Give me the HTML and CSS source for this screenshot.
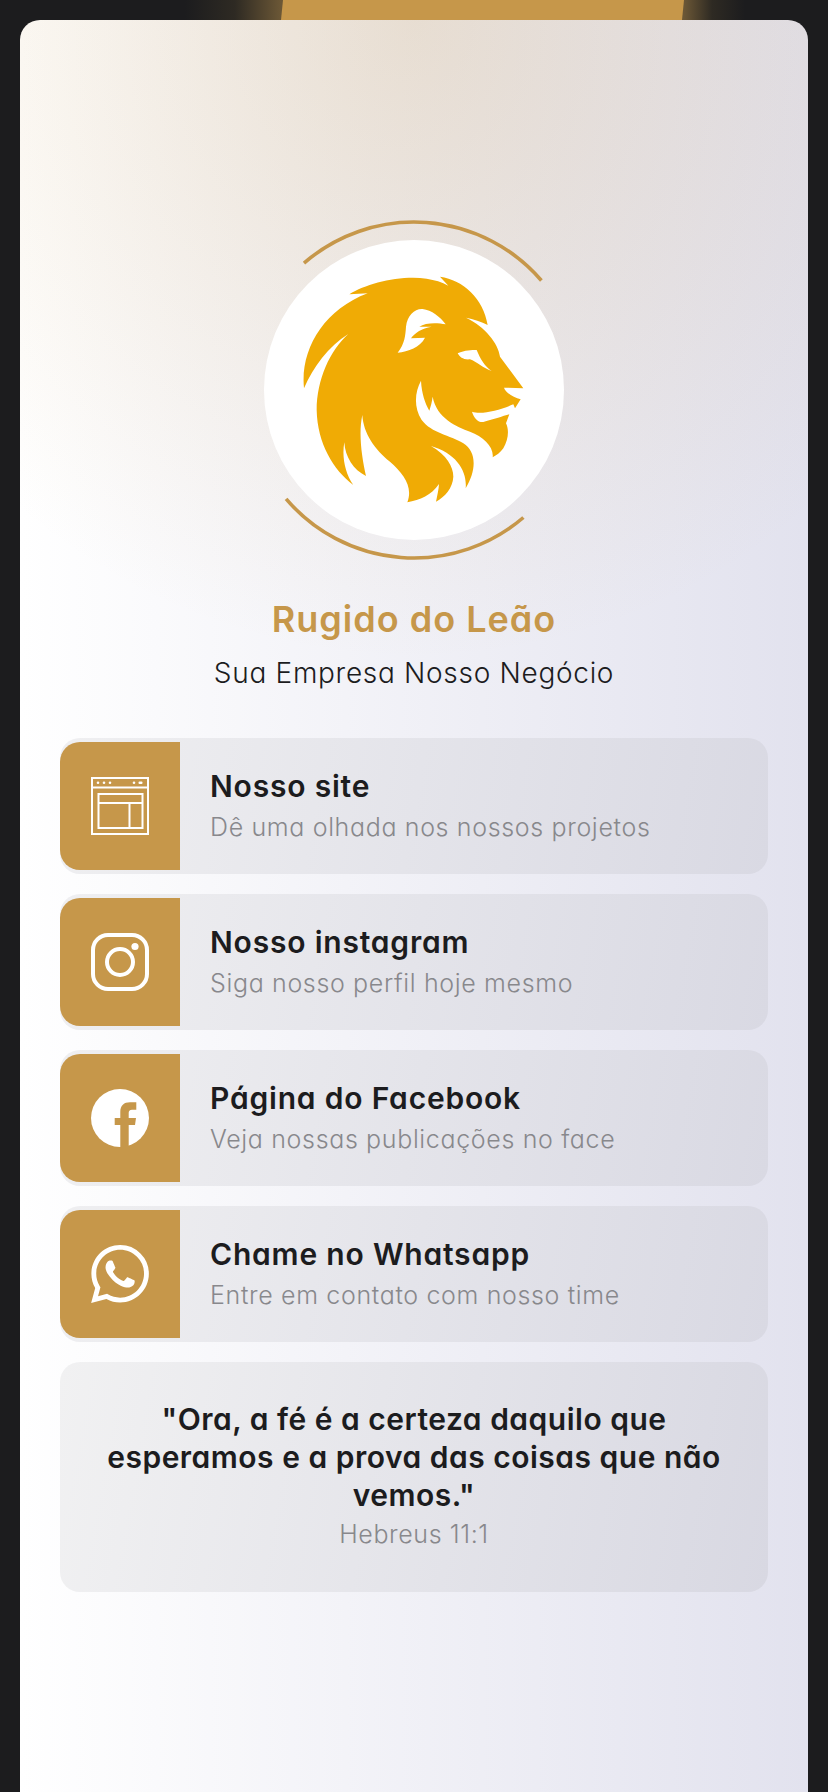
FILE: index.html
```html
<!DOCTYPE html>
<html lang="pt-BR">
<head>
<meta charset="utf-8">
<title>Rugido do Leão</title>
<link rel="stylesheet" href="styles.css">
</head>
<body>
<div class="top-strip"><div class="top-bar"></div></div>
<main class="card">
  <svg class="avatar" viewBox="0 0 340 340" width="340" height="340" aria-label="Logo">
    <path class="arc" d="M60 43.1A168 168 0 0 1 297.4 60.5"/>
    <path class="arc" d="M42.1 278.9A168 168 0 0 0 279.4 297.5"/>
    <circle cx="170" cy="170" r="150" fill="#fff"/>
    <g transform="translate(56 50) scale(.33333)">
      <path class="lion" fill-rule="evenodd" d="M148 73C200 40 300 15 380 26C405 30 425 36 445 47L420 20C490 30 550 85 563 165C545 155 520 147 498 143C555 170 595 220 600 260L670 355L612 353C616 368 640 382 662 388L645 415L640 403C600 420 545 435 516 425C522 445 535 458 550 456C575 450 610 438 628 433L618 460C628 480 625 510 610 535C600 548 590 556 578 562C582 530 550 500 510 485C470 470 410 445 398 380C396 395 392 410 388 422C375 400 365 370 363 332C345 365 340 410 365 450C395 490 450 495 490 520C530 545 530 600 497 655C502 605 470 550 393 528C440 555 460 590 460 620C458 655 435 680 408 695C412 675 416 660 417 642C395 675 360 690 322 697C340 650 310 610 270 575C225 540 190 490 187 435C175 490 185 560 198 618C160 600 135 560 133 517C125 560 135 610 160 645C100 600 52 520 50 420C50 330 90 240 145 192C85 230 40 290 12 355C0 240 70 120 203 70ZM293 248C315 220 316 195 318 170C322 135 345 115 368 117C395 120 420 140 437 163C410 157 375 158 358 170L395 170C365 175 345 188 333 205L375 203C360 232 325 245 293 248ZM473 250C495 240 515 240 530 240C540 265 555 290 575 303C550 295 530 275 510 268C490 270 480 262 473 250Z"/>
    </g>
  </svg>
  <h1 class="brand">Rugido do Leão</h1>
  <p class="tagline">Sua Empresa Nosso Negócio</p>

  <div class="links">
    <a class="link">
      <span class="link-icon">
        <svg class="ico" viewBox="0 0 58 58" width="58" height="58">
          <g fill="none" stroke="#fff" stroke-width="2">
            <rect x="1" y="1" width="56" height="56"/>
            <path d="M1 10.5H57"/>
            <rect x="7.5" y="17" width="44" height="34"/>
            <path d="M7.5 26H51.5M38.5 26V51"/>
          </g>
          <g fill="#fff">
            <circle cx="7" cy="5.7" r="1.3"/><circle cx="13" cy="5.7" r="1.3"/><circle cx="19" cy="5.7" r="1.3"/>
            <circle cx="43" cy="5.7" r="1.3"/><rect x="47.5" y="4.5" width="4" height="2.4" rx="1"/>
          </g>
        </svg>
      </span>
      <span class="link-text"><strong class="link-title">Nosso site</strong><span class="link-desc">Dê uma olhada nos nossos projetos</span></span>
    </a>
    <a class="link">
      <span class="link-icon">
        <svg class="ico" viewBox="0 0 58 58" width="58" height="58">
          <rect x="2" y="2" width="54" height="54" rx="15" fill="none" stroke="#fff" stroke-width="4"/>
          <circle cx="29" cy="29" r="13" fill="none" stroke="#fff" stroke-width="4"/>
          <circle cx="44" cy="13.5" r="3.6" fill="#fff"/>
        </svg>
      </span>
      <span class="link-text"><strong class="link-title">Nosso instagram</strong><span class="link-desc">Siga nosso perfil hoje mesmo</span></span>
    </a>
    <a class="link">
      <span class="link-icon">
        <svg class="ico" viewBox="0 0 58 58" width="58" height="58">
          <circle cx="29" cy="29" r="29" fill="#fff"/>
          <path fill="#c6974a" d="M29.3 58.5V36H23.7V29H29.3V23C29.3 16.5 33 13.3 39 13.3H45.3V20.7H41C38.5 20.7 37.7 22 37.7 24V29H45L44 36H37.7V58.5Z"/>
        </svg>
      </span>
      <span class="link-text"><strong class="link-title">Página do Facebook</strong><span class="link-desc">Veja nossas publicações no face</span></span>
    </a>
    <a class="link">
      <span class="link-icon">
        <svg class="ico" viewBox="0 0 24 24" width="58" height="58">
          <path fill="#fff" d="M17.472 14.382c-.297-.149-1.758-.867-2.03-.967-.273-.099-.471-.148-.67.15-.197.297-.767.966-.94 1.164-.173.199-.347.223-.644.075-.297-.15-1.255-.463-2.39-1.475-.883-.788-1.48-1.761-1.653-2.059-.173-.297-.018-.458.13-.606.134-.133.298-.347.446-.52.149-.174.198-.298.298-.497.099-.198.05-.371-.025-.52-.075-.149-.669-1.612-.916-2.207-.242-.579-.487-.5-.669-.51-.173-.008-.371-.01-.57-.01-.198 0-.52.074-.792.372-.272.297-1.04 1.016-1.04 2.479 0 1.462 1.065 2.875 1.213 3.074.149.198 2.096 3.2 5.077 4.487.709.306 1.262.489 1.694.625.712.227 1.36.195 1.871.118.571-.085 1.758-.719 2.006-1.413.248-.694.248-1.289.173-1.413-.074-.124-.272-.198-.57-.347m-5.421 7.403h-.004a9.87 9.87 0 01-5.031-1.378l-.361-.214-3.741.982.998-3.648-.235-.374a9.86 9.86 0 01-1.51-5.26c.001-5.45 4.436-9.884 9.888-9.884 2.64 0 5.122 1.03 6.988 2.898a9.825 9.825 0 012.893 6.994c-.003 5.45-4.437 9.884-9.885 9.884m8.413-18.297A11.815 11.815 0 0012.05 0C5.495 0 .16 5.335.157 11.892c0 2.096.547 4.142 1.588 5.945L.057 24l6.305-1.654a11.882 11.882 0 005.683 1.448h.005c6.554 0 11.89-5.335 11.893-11.893a11.821 11.821 0 00-3.48-8.413Z"/>
        </svg>
      </span>
      <span class="link-text"><strong class="link-title">Chame no Whatsapp</strong><span class="link-desc">Entre em contato com nosso time</span></span>
    </a>
  </div>

  <section class="quote">
    <p class="quote-text">"Ora, a fé é a certeza daquilo que esperamos e a prova das coisas que não vemos."</p>
    <p class="quote-ref">Hebreus 11:1</p>
  </section>
</main>
</body>
</html>
```
FILE: styles.css
```css
* { box-sizing: border-box; }
html, body { margin: 0; height: 1792px; overflow: hidden; }
body {
  background: #1c1c1e;
  font-family: Inter, "Noto Sans", sans-serif;
  font-feature-settings: "cv11" 1;
  color: #1c1c1e;
}
.top-strip {
  height: 20px;
  padding-left: 281px;
  background: linear-gradient(90deg, #1c1c1e 185px, #2e2a23 235px, #6b5736 281px, #6b5736 684px, #2e2a23 712px, #1c1c1e 745px);
}
.top-bar {
  width: 403px;
  height: 20px;
  background: #c6974a;
  clip-path: polygon(2px 0, 100% 0, 401px 100%, 0 100%);
}
.card {
  height: 1772px;
  margin: 0 20px;
  padding: 200px 40px 0;
  border-radius: 20px 20px 0 0;
  background:
    radial-gradient(ellipse 620px 640px at 50% 0, rgba(198, 151, 74, .21), rgba(198, 151, 74, 0)),
    linear-gradient(90deg, #fff 0, #e2e2ee 100%);
  display: flex;
  flex-direction: column;
}
.avatar { display: block; align-self: center; flex: none; }
.arc { fill: none; stroke: #c6974a; stroke-width: 3.6; }
.lion { fill: #f0ab05; }
.brand {
  margin: 37px 0 0;
  font-size: 36px;
  line-height: 44px;
  font-weight: 600;
  letter-spacing: 1px;
  color: #c6974a;
  text-align: center;
}
.tagline {
  margin: 14px 0 0;
  font-size: 28px;
  line-height: 36px;
  font-weight: 300;
  letter-spacing: .7px;
  text-align: center;
}
.links { margin-top: 47px; display: flex; flex-direction: column; gap: 20px; }
.link {
  display: flex;
  height: 136px;
  padding: 4px 0;
  border-radius: 20px;
  background: linear-gradient(100deg, #efeff1 0, #d9d9e3 100%);
}
.link-icon {
  flex: none;
  width: 120px;
  border-radius: 20px 0 0 20px;
  background: #c6974a;
  display: flex;
  align-items: center;
  justify-content: center;
}
.ico { display: block; }
.link-text {
  display: flex;
  flex-direction: column;
  justify-content: center;
  padding-left: 30px;
}
.link-title { font-size: 30px; line-height: 42px; font-weight: 600; letter-spacing: .8px; }
.link-desc { font-size: 25px; line-height: 40px; font-weight: 300; letter-spacing: .65px; color: #88888c; }
.quote {
  margin-top: 20px;
  height: 230px;
  padding: 38px 40px 0;
  border-radius: 20px;
  background: linear-gradient(100deg, #f1f1f2 0, #d8d8e2 100%);
  text-align: center;
}
.quote-text { margin: 0; font-size: 30px; line-height: 38px; font-weight: 600; letter-spacing: .5px; }
.quote-ref { margin: 1px 0 0; font-size: 25px; line-height: 38px; font-weight: 300; letter-spacing: .6px; color: #88888c; }
```
